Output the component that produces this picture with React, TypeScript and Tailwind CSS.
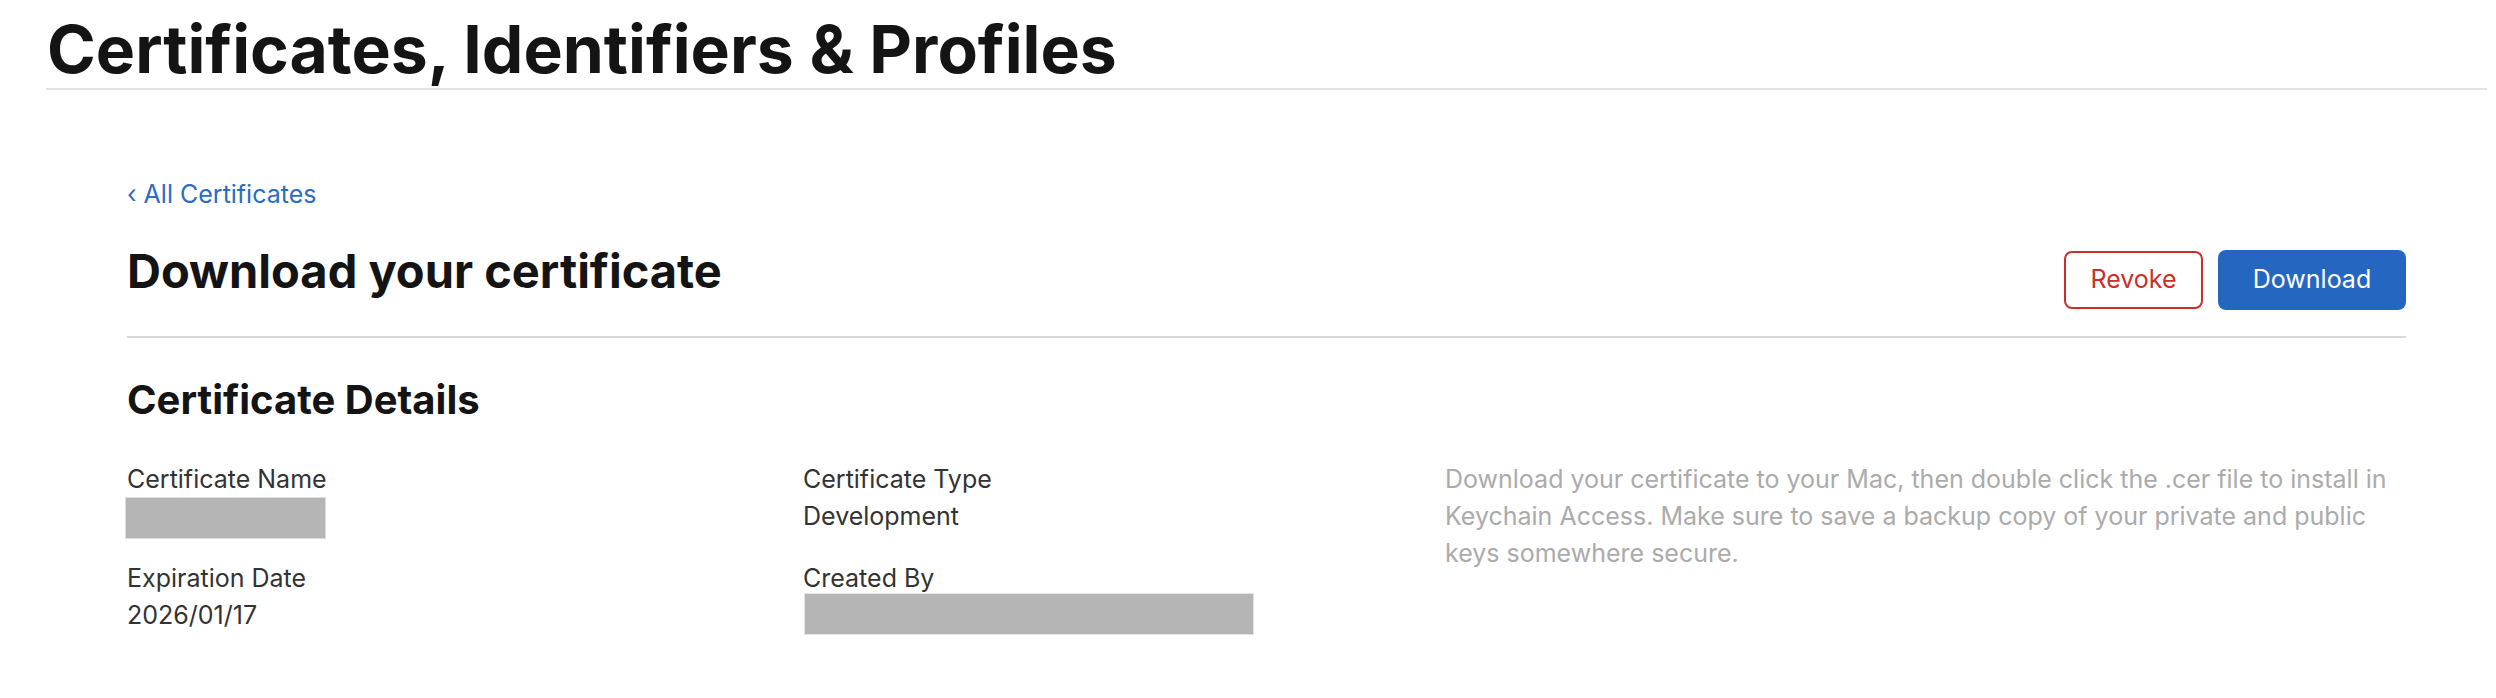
export default function App() {
  return (
    <div className="min-h-screen bg-white font-[Inter,'Noto_Sans',sans-serif] text-[#141414]">
      <div className="pl-[46px] pr-[9px]">
        {/* Page title */}
        <h1 className="border-b-2 border-[#e2e2e2] pt-[16px] pb-[6px] pl-[1px] text-[66px] leading-[66px] font-bold">
          Certificates, Identifiers &amp; Profiles
        </h1>

        <div className="px-[81px]">
          {/* Back link */}
          <a href="#" className="mt-[86px] block text-[25px] leading-[37px] text-[#2b6cc4]">
            <span className="mr-[7px]">‹</span>All Certificates
          </a>

          {/* Header row */}
          <div className="mt-[30px] flex items-start justify-between border-b-2 border-[#d8d8d8] pb-[26px]">
            <h2 className="text-[47px] leading-[56px] font-bold">Download your certificate</h2>
            <div className="mt-[7px] flex items-center gap-[15px]">
              <button className="flex h-[58px] w-[139px] items-center justify-center rounded-[8px] border-2 border-[#c9302a] text-[25px] text-[#c9302a]">
                Revoke
              </button>
              <button className="flex h-[60px] w-[188px] items-center justify-center rounded-[8px] bg-[#2567c0] text-[25px] text-white">
                Download
              </button>
            </div>
          </div>

          {/* Details */}
          <h3 className="mt-[38px] text-[40px] leading-[48px] font-bold">Certificate Details</h3>

          <div className="mt-[37px] grid grid-cols-[676px_642px_1fr] text-[25px] leading-[37px] text-[#333333]">
            <div>
              <div>Certificate Name</div>
              <div className="-ml-[2px] -mt-[1px] h-[42px] w-[201px] border border-[#dedede] bg-[#b5b5b5]" />
              <div className="mt-[21px]">Expiration Date</div>
              <div>2026/01/17</div>
            </div>

            <div>
              <div>Certificate Type</div>
              <div>Development</div>
              <div className="mt-[25px]">Created By</div>
              <div className="-mt-[4px] ml-[1px] h-[42px] w-[450px] border border-[#e4e4e4] bg-[#b5b5b5]" />
            </div>

            <p className="text-[#ababab]">
              <span className="block whitespace-nowrap">
                Download your certificate to your Mac, then double click the .cer file to install in
              </span>
              <span className="block whitespace-nowrap">
                Keychain Access. Make sure to save a backup copy of your private and public
              </span>
              <span className="block whitespace-nowrap">keys somewhere secure.</span>
            </p>
          </div>
        </div>
      </div>
    </div>
  );
}
